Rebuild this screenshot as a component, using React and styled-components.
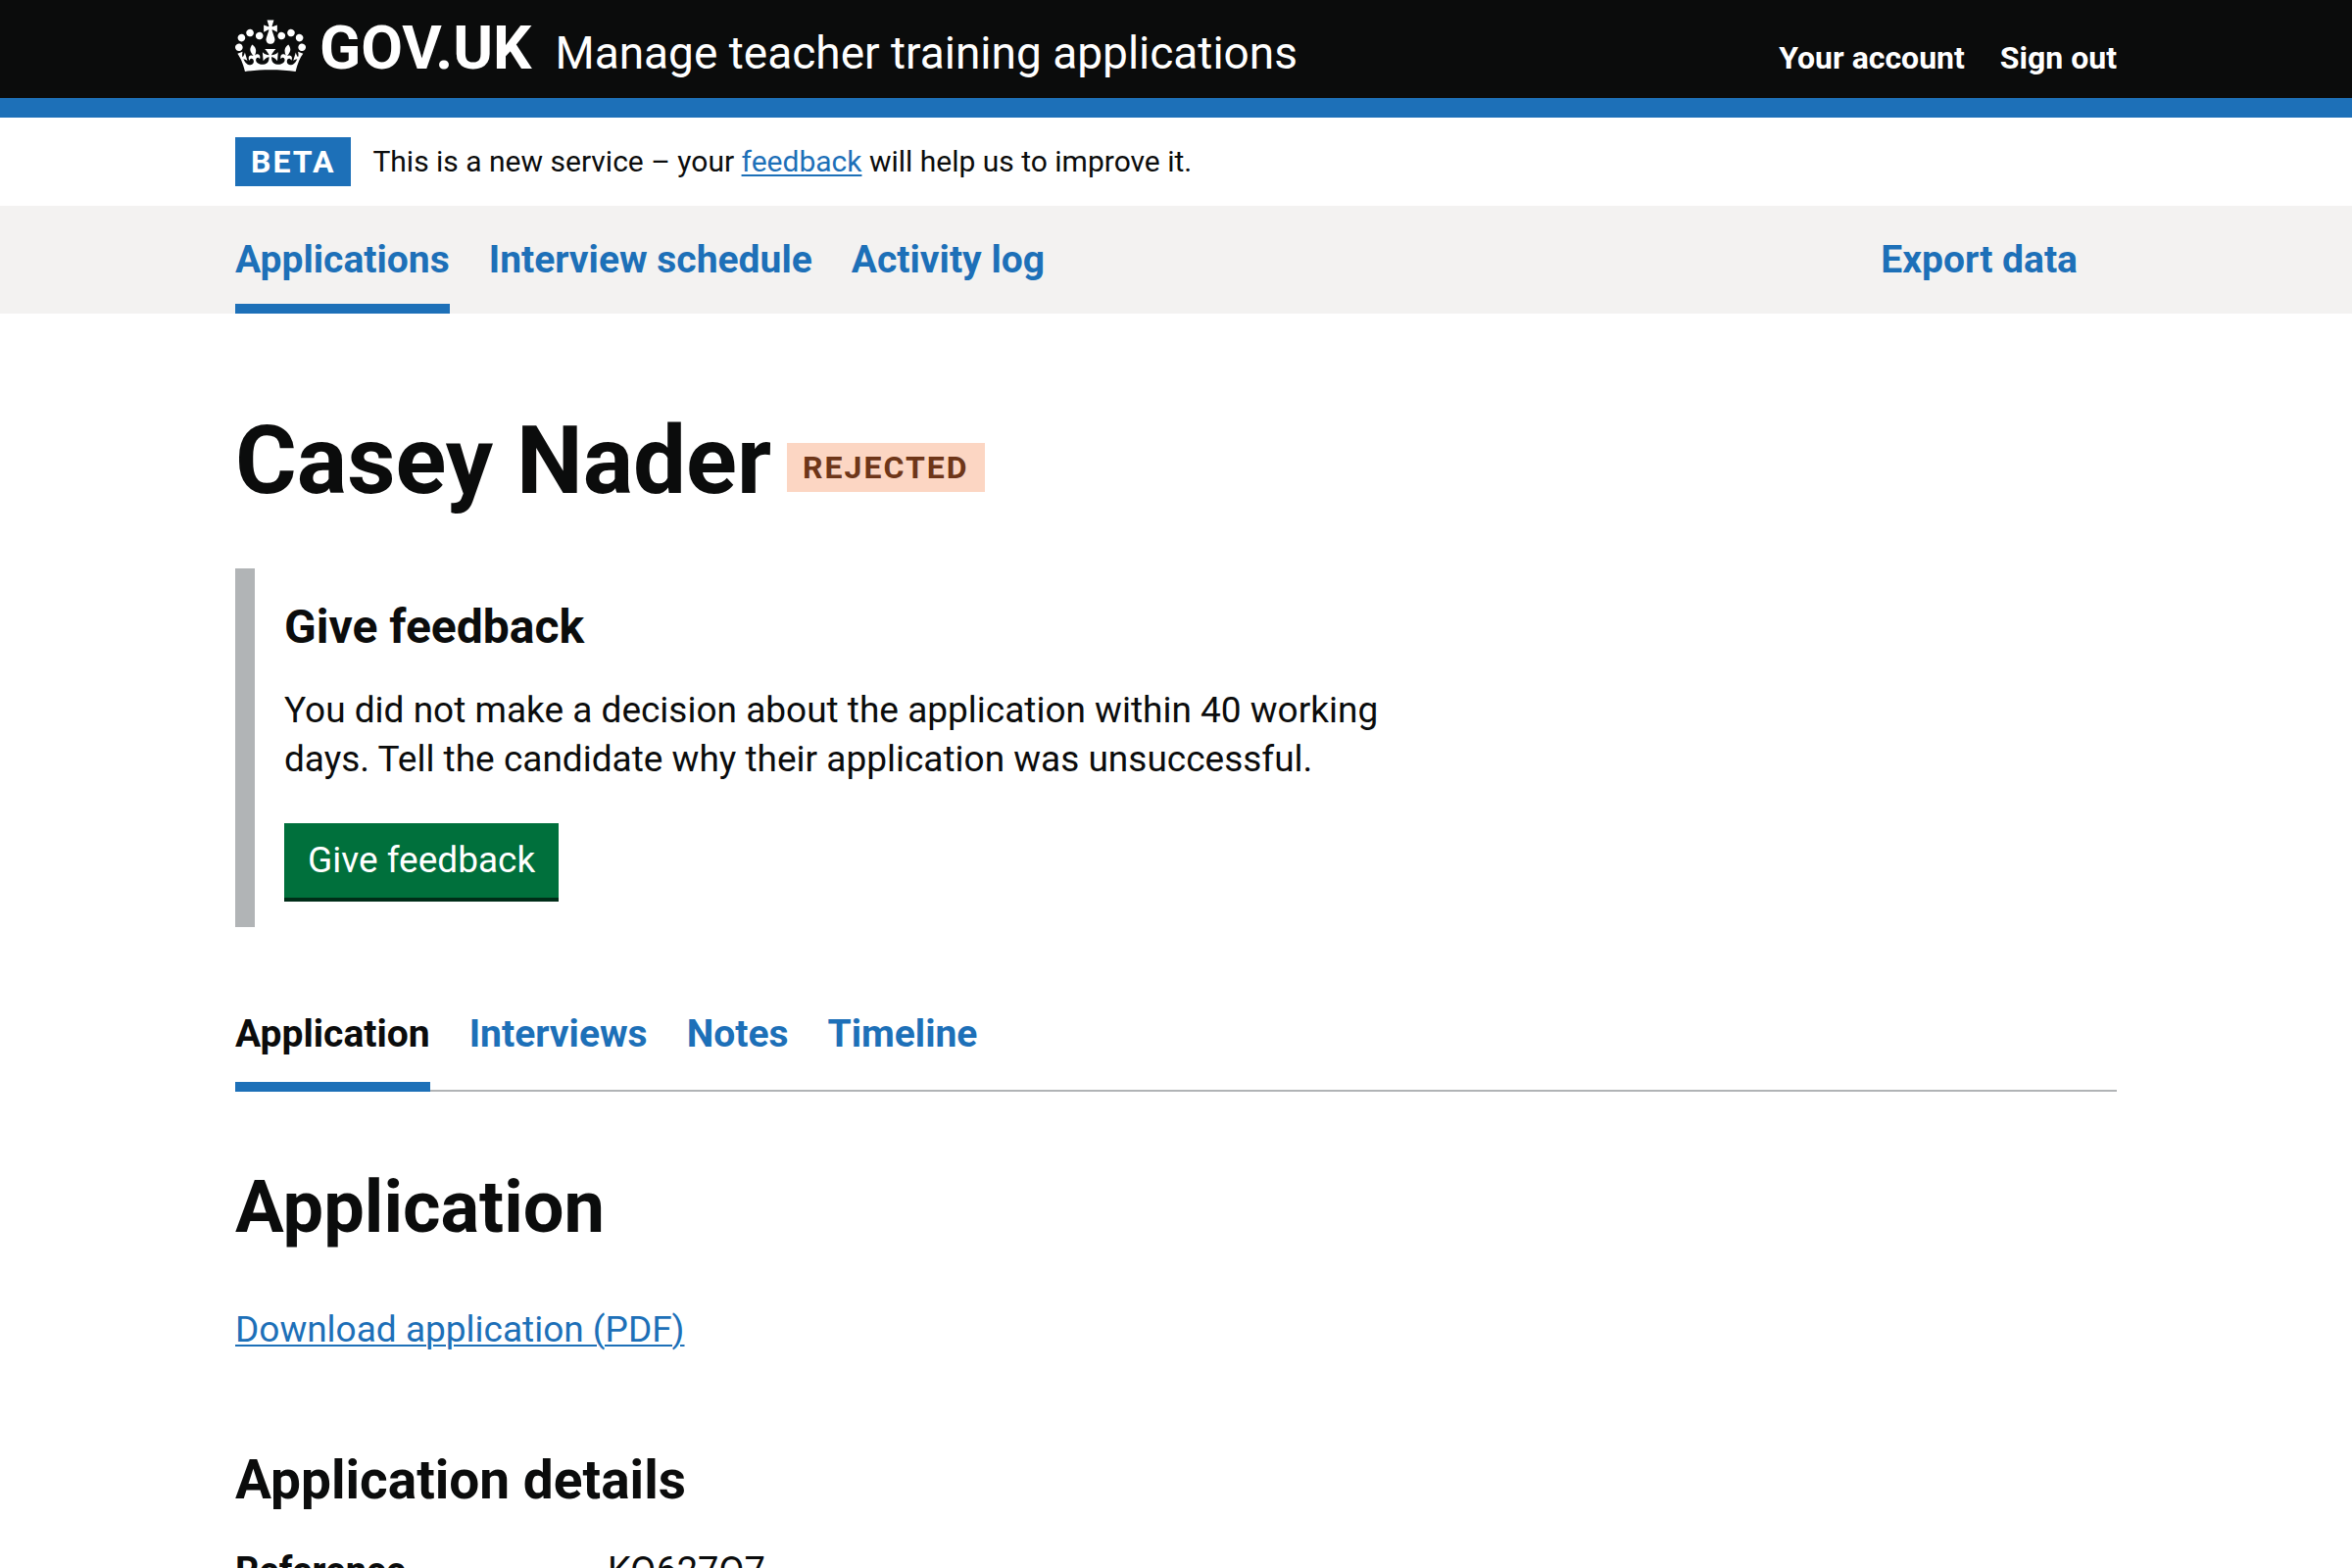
import React from "react";
import styled, { createGlobalStyle } from "styled-components";

const colour = {
  black: "#0b0c0c",
  blue: "#1d70b8",
  grey: "#f3f2f1",
  border: "#b1b4b6",
  green: "#00703c",
  greenDark: "#002d18",
};

const GlobalStyle = createGlobalStyle`
  *, *::before, *::after { box-sizing: border-box; }
  body {
    margin: 0;
    background: #fff;
    color: ${colour.black};
    font-family: Roboto, "Liberation Sans", sans-serif;
    font-size: 37px;
    line-height: 50px;
  }
  h1, h2, h3, p, ul, dl, dd { margin: 0; padding: 0; }
  ul { list-style: none; }
`;

const Container = styled.div`
  max-width: 2000px;
  margin: 0 auto;
  padding: 0 40px;
`;

const Header = styled.header`
  background: ${colour.black};
  border-bottom: 20px solid ${colour.blue};
  color: #fff;
`;

const HeaderRow = styled(Container)`
  display: flex;
  align-items: baseline;
  min-height: 100px;
  padding-top: 20px;
  padding-bottom: 20px;
`;

const LogoLink = styled.a`
  display: flex;
  align-items: baseline;
  gap: 14px;
  color: #fff;
  font-size: 62px;
  font-weight: 700;
  line-height: 58px;
  text-decoration: none;
`;

const CrownSvg = styled.svg`
  flex: none;
  align-self: flex-start;
  width: 72px;
  height: 54px;
  fill: currentColor;
`;

const ServiceLink = styled.a`
  margin-left: 24px;
  color: #fff;
  font-size: 46px;
  line-height: 50px;
  text-decoration: none;
`;

const AccountList = styled.ul`
  display: flex;
  gap: 36px;
  margin-left: auto;
  line-height: 40px;
`;

const AccountLink = styled.a`
  color: #fff;
  font-size: 32px;
  font-weight: 700;
  text-decoration: none;
`;

const PhaseBanner = styled(Container)`
  display: flex;
  align-items: center;
  gap: 22px;
  padding-top: 20px;
  padding-bottom: 20px;
`;

const Tag = styled.strong`
  display: block;
  padding: 0 16px;
  background: ${(p) => (p.$tone === "orange" ? "#fcd6c3" : colour.blue)};
  color: ${(p) => (p.$tone === "orange" ? "#6e3619" : "#fff")};
  font-size: 32px;
  font-weight: 700;
  line-height: 50px;
  letter-spacing: 2px;
  text-transform: uppercase;
`;

const PhaseText = styled.p`
  font-size: 30px;
`;

const TextLink = styled.a`
  color: ${colour.blue};
  text-decoration: underline;
  text-decoration-thickness: 2px;
  text-underline-offset: 3px;
`;

const PrimaryNav = styled.nav`
  background: ${colour.grey};
`;

const NavRow = styled(Container)`
  display: flex;
  justify-content: space-between;
`;

const NavList = styled.ul`
  display: flex;
  gap: 40px;
  padding-right: 40px;
`;

const NavLink = styled.a`
  display: block;
  padding: 30px 0 20px;
  border-bottom: 10px solid transparent;
  color: ${colour.blue};
  font-size: 39px;
  font-weight: 700;
  text-decoration: none;
  &[aria-current] { border-color: ${colour.blue}; }
`;

const Main = styled(Container).attrs({ as: "main" })`
  padding-top: 100px;
  padding-bottom: 80px;
`;

const TitleRow = styled.div`
  display: flex;
  align-items: flex-end;
  gap: 16px;
  ${Tag} { margin-bottom: 18px; }
`;

const PageTitle = styled.h1`
  font-size: 96px;
  font-weight: 700;
  line-height: 100px;
`;

const Inset = styled.section`
  max-width: 1280px;
  margin-top: 60px;
  padding: 30px 0 30px 30px;
  border-left: 20px solid ${colour.border};
`;

const InsetTitle = styled.h2`
  margin-bottom: 30px;
  font-size: 48px;
  font-weight: 700;
  line-height: 60px;
`;

const InsetText = styled.p`
  max-width: 1160px;
  margin-bottom: 40px;
`;

const Button = styled.button`
  display: block;
  height: 76px;
  padding: 0 24px;
  border: 0;
  background: ${colour.green};
  box-shadow: 0 4px 0 ${colour.greenDark};
  color: #fff;
  font: inherit;
`;

const Tabs = styled.nav`
  margin-top: 60px;
  box-shadow: inset 0 -2px 0 ${colour.border};
`;

const TabList = styled.ul`
  display: flex;
  gap: 40px;
`;

const TabLink = styled.a`
  display: block;
  padding: 24px 0;
  border-bottom: 10px solid transparent;
  color: ${colour.blue};
  font-size: 39px;
  font-weight: 700;
  text-decoration: none;
  &[aria-current] {
    border-color: ${colour.blue};
    color: ${colour.black};
  }
`;

const SectionTitle = styled.h2`
  margin: 78px 0 60px;
  font-size: 74px;
  font-weight: 700;
  line-height: 80px;
`;

const DetailsTitle = styled.h3`
  margin: 98px 0 38px;
  font-size: 55px;
  font-weight: 700;
  line-height: 60px;
`;

const SummaryRow = styled.dl`
  display: grid;
  grid-template-columns: 380px 1fr;
  font-size: 38px;
  dt { font-weight: 700; }
`;

function Crown() {
  return (
    <CrownSvg viewBox="0 0 132 97" aria-hidden="true">
      <path d="M25 30.2c3.5 1.5 7.7-.2 9.1-3.7 1.5-3.6-.2-7.8-3.9-9.2-3.6-1.4-7.6.3-9.1 3.9-1.4 3.5.3 7.5 3.9 9zM9 39.5c3.6 1.5 7.8-.2 9.2-3.7 1.5-3.6-.2-7.8-3.9-9.1-3.6-1.5-7.6.2-9.1 3.8-1.4 3.5.3 7.5 3.8 9zM4.4 57.2c3.5 1.5 7.7-.2 9.1-3.8 1.5-3.6-.2-7.7-3.9-9.1-3.5-1.5-7.6.3-9.1 3.8-1.4 3.5.3 7.6 3.9 9.1zm38.3-21.4c3.5 1.5 7.7-.2 9.1-3.8 1.5-3.6-.2-7.7-3.9-9.1-3.6-1.5-7.6.3-9.1 3.8-1.3 3.6.4 7.7 3.9 9.1zm64.4-5.6c-3.6 1.5-7.8-.2-9.1-3.7-1.5-3.6.2-7.8 3.8-9.2 3.6-1.4 7.7.3 9.2 3.9 1.3 3.5-.4 7.5-3.9 9zm15.9 9.3c-3.6 1.5-7.7-.2-9.1-3.7-1.5-3.6.2-7.8 3.7-9.1 3.6-1.5 7.7.2 9.2 3.8 1.5 3.5-.3 7.5-3.8 9zm4.7 17.7c-3.6 1.5-7.8-.2-9.2-3.8-1.5-3.6.2-7.7 3.9-9.1 3.6-1.5 7.7.3 9.2 3.8 1.3 3.5-.4 7.6-3.9 9.1zM89.3 35.8c-3.6 1.5-7.8-.2-9.2-3.8-1.4-3.6.2-7.7 3.9-9.1 3.6-1.5 7.7.3 9.2 3.8 1.4 3.6-.3 7.7-3.9 9.1zM69.7 17.7l8.9 4.7V9.3l-8.9 2.8c-.2-.3-.5-.6-.9-.9L72.4 0H59.6l3.5 11.2c-.3.3-.6.5-.9.9l-8.8-2.8v13.1l8.8-4.7c.3.3.6.7.9.9l-5 15.4v.1c-.2.8-.4 1.6-.4 2.4 0 4.1 3.1 7.5 7 8.1h.2c.3 0 .7.1 1 .1.4 0 .7 0 1-.1h.2c4-.6 7.1-4.1 7.1-8.1 0-.8-.1-1.7-.4-2.4V34l-5.1-15.4c.4-.2.7-.6 1-.9zM66 92.8c16.9 0 32.8 1.1 47.1 3.2 4-16.9 8.9-26.7 14-33.5l-9.6-3.4c1 4.9 1.1 7.2 0 10.2-1.5-1.4-3-4.3-4.2-8.7L108.6 76c2.8-2 5-3.2 7.5-3.3-4.4 9.4-10 11.9-13.6 11.2-4.3-.8-6.3-4.6-5.6-7.9 1-4.7 5.7-5.9 8-.5 4.3-8.7-3-11.4-7.6-8.8 7.1-7.2 7.9-13.5 2.1-21.1-8 6.1-8.1 12.3-4.5 20.8-4.7-5.4-12.1-2.5-9.5 6.2 3.4-5.2 7.9-2 7.2 3.1-.6 4.3-6.4 7.8-13.5 7.2-10.3-.9-10.9-8-11.2-13.8 2.5-.5 7.1 1.8 11 7.3L80.2 60c-4.1 4.4-8 5.3-12.3 5.4 1.4-4.4 8-11.6 8-11.6H55.5s6.4 7.2 7.9 11.6c-4.2-.1-8-1-12.3-5.4l1.4 16.4c3.9-5.5 8.5-7.7 10.9-7.3-.3 5.8-.9 12.8-11.1 13.8-7.2.6-12.9-2.9-13.5-7.2-.7-5 3.8-8.3 7.1-3.1 2.7-8.7-4.6-11.6-9.4-6.2 3.7-8.5 3.6-14.7-4.6-20.8-5.8 7.6-5 13.9 2.2 21.1-4.7-2.6-11.9.1-7.7 8.8 2.3-5.5 7.1-4.2 8.1.5.7 3.3-1.3 7.1-5.7 7.9-3.5.7-9-1.8-13.5-11.2 2.5.1 4.7 1.3 7.5 3.3l-4.7-15.4c-1.2 4.4-2.7 7.2-4.3 8.7-1.1-3-.9-5.3 0-10.2l-9.5 3.4c5 6.9 9.9 16.7 14 33.5 14.8-2.1 30.8-3.2 47.7-3.2z" />
    </CrownSvg>
  );
}

const sections = ["Applications", "Interview schedule", "Activity log"];
const tabs = ["Application", "Interviews", "Notes", "Timeline"];

export default function App() {
  return (
    <>
      <GlobalStyle />
      <Header>
        <HeaderRow>
          <LogoLink href="#"><Crown />GOV.UK</LogoLink>
          <ServiceLink href="#">Manage teacher training applications</ServiceLink>
          <AccountList>
            <li><AccountLink href="#">Your account</AccountLink></li>
            <li><AccountLink href="#">Sign out</AccountLink></li>
          </AccountList>
        </HeaderRow>
      </Header>
      <PhaseBanner>
        <Tag>Beta</Tag>
        <PhaseText>
          This is a new service – your <TextLink href="#">feedback</TextLink> will help us to improve it.
        </PhaseText>
      </PhaseBanner>
      <PrimaryNav aria-label="Primary">
        <NavRow>
          <NavList>
            {sections.map((name, i) => (
              <li key={name}>
                <NavLink href="#" aria-current={i === 0 ? "page" : undefined}>{name}</NavLink>
              </li>
            ))}
          </NavList>
          <NavList>
            <li><NavLink href="#">Export data</NavLink></li>
          </NavList>
        </NavRow>
      </PrimaryNav>
      <Main>
        <TitleRow>
          <PageTitle>Casey Nader</PageTitle>
          <Tag $tone="orange">Rejected</Tag>
        </TitleRow>
        <Inset>
          <InsetTitle>Give feedback</InsetTitle>
          <InsetText>
            You did not make a decision about the application within 40 working
            days. Tell the candidate why their application was unsuccessful.
          </InsetText>
          <Button type="button">Give feedback</Button>
        </Inset>
        <Tabs aria-label="Application sections">
          <TabList>
            {tabs.map((name, i) => (
              <li key={name}>
                <TabLink href="#" aria-current={i === 0 ? "page" : undefined}>{name}</TabLink>
              </li>
            ))}
          </TabList>
        </Tabs>
        <SectionTitle>Application</SectionTitle>
        <p><TextLink href="#">Download application (PDF)</TextLink></p>
        <DetailsTitle>Application details</DetailsTitle>
        <SummaryRow>
          <dt>Reference</dt>
          <dd>KQ627Q7</dd>
        </SummaryRow>
      </Main>
    </>
  );
}
